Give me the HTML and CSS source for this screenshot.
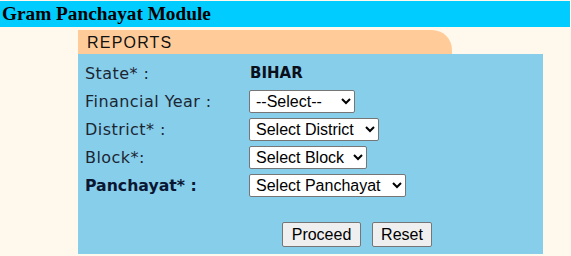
FILE: index.html
```html
<!DOCTYPE html>
<html>
<head>
<meta charset="utf-8">
<link rel="stylesheet" href="styles.css">
</head>
<body>
<div class="topbar">Gram Panchayat Module</div>
<div class="module">
  <div class="tab">REPORTS</div>
  <div class="panel">
    <div class="form">
      <div class="lbl">State* :</div>
      <div class="val"><span class="state">BIHAR</span></div>
      <div class="lbl">Financial Year :</div>
      <div class="val"><select class="sel w-fy"><option>--Select--</option></select></div>
      <div class="lbl">District* :</div>
      <div class="val"><select class="sel w-dist"><option>Select District</option></select></div>
      <div class="lbl">Block*:</div>
      <div class="val"><select class="sel w-block"><option>Select Block</option></select></div>
      <div class="lbl bold">Panchayat* :</div>
      <div class="val"><select class="sel w-pan"><option>Select Panchayat</option></select></div>
    </div>
    <div class="actions">
      <button class="btn w-proceed">Proceed</button>
      <button class="btn w-reset">Reset</button>
    </div>
  </div>
</div>
</body>
</html>
```
FILE: styles.css
```css
html, body {
  margin: 0;
  padding: 0;
  background: #fff8ec;
}
body {
  padding-top: 1px;
}
.topbar {
  height: 26px;
  background: #00ccff;
  color: #000;
  font-family: "Liberation Serif", "Times New Roman", serif;
  font-weight: bold;
  font-size: 19.3px;
  line-height: 26px;
  padding-left: 2px;
  width: 568px;
}
.module {
  margin-left: 78px;
  margin-top: 3px;
  width: 465px;
}
.tab {
  width: 365px;
  height: 24px;
  background: #ffcc99;
  border-top-right-radius: 20px;
  font-family: "Liberation Sans", Arial, sans-serif;
  font-size: 16px;
  letter-spacing: 1.2px;
  line-height: 25px;
  color: #111;
  padding-left: 9px;
}
.panel {
  height: 195px;
  background: #87ceeb;
  padding-top: 5px;
}
.form {
  display: grid;
  grid-template-columns: 171px 1fr;
  grid-auto-rows: 28px;
  align-items: center;
}
.lbl {
  padding-left: 7px;
  font-family: "DejaVu Sans", Verdana, sans-serif;
  font-size: 16px;
  letter-spacing: 0.45px;
  color: #1c2633;
}
.lbl.bold {
  font-weight: bold;
  font-size: 15.7px;
  letter-spacing: 0;
  color: #0a1733;
}
.val {
  display: flex;
  align-items: center;
}
.state {
  font-family: "DejaVu Sans", Verdana, sans-serif;
  font-weight: bold;
  font-size: 15px;
  color: #0a0f1a;
  padding-left: 1px;
}
.sel {
  height: 23px;
  font-family: "Liberation Sans", Arial, sans-serif;
  font-size: 16px;
  color: #000;
  background: #fff;
  border: 1px solid #767676;
  border-radius: 2px;
  padding: 0 0 0 2px;
  margin: 0;
}
.w-fy { width: 106px; }
.w-dist { width: 130px; }
.w-block { width: 118px; }
.w-pan { width: 157px; }
.actions {
  display: flex;
  gap: 11px;
  padding-left: 204px;
  margin-top: 23px;
}
.btn {
  height: 25px;
  font-family: "Liberation Sans", Arial, sans-serif;
  font-size: 16px;
  color: #000;
  background: #efefef;
  border: 1px solid #767676;
  border-radius: 2px;
  padding: 0;
  margin: 0;
}
.w-proceed { width: 79px; }
.w-reset { width: 60px; }
```
